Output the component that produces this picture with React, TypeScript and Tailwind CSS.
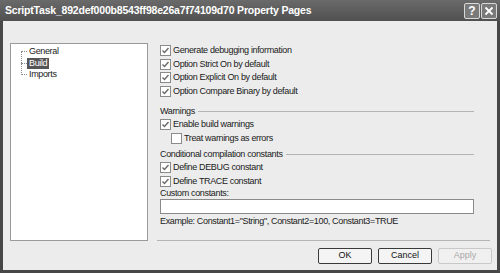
import React from "react";

const FONT = { fontFamily: '"Liberation Sans", Arial, sans-serif' };

function Check({ checked = true }: { checked?: boolean }) {
  return (
    <span className="flex h-[11px] w-[11px] shrink-0 items-center justify-center border border-[#8a8a8a] bg-white">
      {checked ? (
        <svg width="9" height="9" viewBox="0 0 9 9">
          <path d="M1.5 4.5 L3.5 6.5 L7.5 2" fill="none" stroke="#6a6a6a" strokeWidth="1.4" />
        </svg>
      ) : null}
    </span>
  );
}

function Row({ label, checked = true, indent = false }: { label: string; checked?: boolean; indent?: boolean }) {
  return (
    <div className={`flex h-[13.5px] items-center gap-[2px] ${indent ? "pl-[11px]" : ""}`}>
      <Check checked={checked} />
      <span className="text-[9px] leading-none tracking-[-0.35px] text-[#1a1a1a]">{label}</span>
    </div>
  );
}

function GroupLabel({ text }: { text: string }) {
  return (
    <div className="flex h-[13px] items-center gap-[3px] text-[9px] leading-none tracking-[-0.35px] text-[#1a1a1a]">
      <span className="whitespace-nowrap">{text}</span>
      <span className="h-px flex-1 bg-[#b4b4b4]" />
    </div>
  );
}

function Button({ label, disabled = false }: { label: string; disabled?: boolean }) {
  return (
    <div
      className={`flex h-[16px] w-[54px] items-center justify-center rounded-[2px] border text-[9px] ${
        disabled ? "border-[#c8c8c8] bg-[#f0f0f0] text-[#a8a8a8]" : "border-[#3a3a3a] bg-[#f4f4f4] text-[#111]"
      }`}
    >
      {label}
    </div>
  );
}

export default function App() {
  return (
    <div style={FONT} className="flex h-[273px] w-[500px] flex-col overflow-hidden bg-[#474747]">
      {/* title bar */}
      <div className="flex h-[21px] items-center justify-between bg-gradient-to-b from-[#6a6a6a] to-[#505050] pl-[5px] pr-[3px]">
        <span className="text-[10.5px] font-bold tracking-[-0.2px] text-white">
          ScriptTask_892def000b8543ff98e26a7f74109d70 Property Pages
        </span>
        <div className="flex gap-[1px]">
          <div className="flex h-[16px] w-[16px] items-center justify-center rounded-[2px] border border-[#d8d8d8] bg-[#7a7a7a] text-[12px] font-bold leading-none text-white">
            ?
          </div>
          <div className="flex h-[16px] w-[16px] items-center justify-center rounded-[2px] border border-[#d8d8d8] bg-[#7a7a7a]">
            <svg width="10" height="10" viewBox="0 0 10 10">
              <path d="M1.5 1.5 L8.5 8.5 M8.5 1.5 L1.5 8.5" stroke="white" strokeWidth="1.8" />
            </svg>
          </div>
        </div>
      </div>

      {/* body */}
      <div className="mx-[3px] mb-[3px] flex flex-1 flex-col bg-[#ececec] pt-[22px]">
        <div className="flex">
          {/* tree */}
          <div className="ml-[7px] h-[198px] w-[138px] border border-[#9a9a9a] bg-white">
            <div className="relative pt-[2px] text-[9px] leading-none tracking-[-0.35px] text-[#1a1a1a]">
              <span className="absolute left-[10px] top-[7px] h-[24px] border-l border-dotted border-[#8a8a8a]" />
              <div className="flex h-[11.5px] items-center pl-[10px]">
                <span className="w-[6px] border-t border-dotted border-[#8a8a8a]" />
                <span className="pl-[2px]">General</span>
              </div>
              <div className="flex h-[11.5px] items-center pl-[10px]">
                <span className="w-[6px] border-t border-dotted border-[#8a8a8a]" />
                <span className="flex h-[11px] items-center bg-[#555555] px-[2px] text-white">Build</span>
              </div>
              <div className="flex h-[11.5px] items-center pl-[10px]">
                <span className="w-[6px] border-t border-dotted border-[#8a8a8a]" />
                <span className="pl-[2px]">Imports</span>
              </div>
            </div>
          </div>

          {/* page */}
          <div className="ml-[9px] flex h-[198px] w-[333px] flex-col border-b border-[#b4b4b4] pl-[3px] pr-[16px] pt-[1px]">
            <Row label="Generate debugging information" />
            <Row label="Option Strict On by default" />
            <Row label="Option Explicit On by default" />
            <Row label="Option Compare Binary by default" />
            <div className="mt-[7px]">
              <GroupLabel text="Warnings" />
            </div>
            <Row label="Enable build warnings" />
            <Row label="Treat warnings as errors" checked={false} indent />
            <div className="mt-[3px]">
              <GroupLabel text="Conditional compilation constants" />
            </div>
            <Row label="Define DEBUG constant" />
            <Row label="Define TRACE constant" />
            <div className="flex h-[10px] items-center text-[9px] leading-none tracking-[-0.35px] text-[#1a1a1a]">
              Custom constants:
            </div>
            <div className="mt-[1px] h-[15px] border border-[#8a8a8a] bg-white" />
            <div className="flex h-[14px] items-center text-[9px] leading-none tracking-[-0.35px] text-[#1a1a1a]">
              Example: Constant1="String", Constant2=100, Constant3=TRUE
            </div>
          </div>
        </div>

        {/* buttons */}
        <div className="mt-[7px] flex justify-end gap-[6px] pr-[5px]">
          <Button label="OK" />
          <Button label="Cancel" />
          <Button label="Apply" disabled />
        </div>
      </div>
    </div>
  );
}
